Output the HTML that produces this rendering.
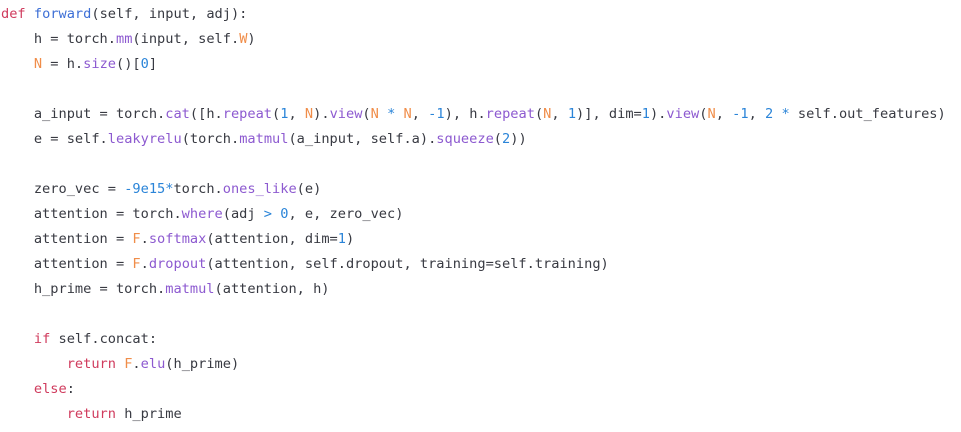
<!DOCTYPE html>
<html><head><meta charset="utf-8"><style>
html,body{margin:0;background:#fff;width:961px;height:432px;overflow:hidden}
pre{margin:0;position:absolute;left:1px;top:2px;font-family:"DejaVu Sans Mono",monospace;font-size:13.65px;line-height:25px;color:#383a42}
.k{color:#d03c5e}.f{color:#3d6fd6}.m{color:#8d5ad0}.o{color:#f08d49}.n{color:#2a84d8}
</style></head><body><pre><span class="k">def</span> <span class="f">forward</span>(self, input, adj):
    h = torch.<span class="m">mm</span>(input, self.<span class="o">W</span>)
    <span class="o">N</span> = h.<span class="m">size</span>()[<span class="n">0</span>]

    a_input = torch.<span class="m">cat</span>([h.<span class="m">repeat</span>(<span class="n">1</span>, <span class="o">N</span>).<span class="m">view</span>(<span class="o">N</span> <span class="n">*</span> <span class="o">N</span>, <span class="n">-1</span>), h.<span class="m">repeat</span>(<span class="o">N</span>, <span class="n">1</span>)], dim=<span class="n">1</span>).<span class="m">view</span>(<span class="o">N</span>, <span class="n">-1</span>, <span class="n">2</span> <span class="n">*</span> self.out_features)
    e = self.<span class="m">leakyrelu</span>(torch.<span class="m">matmul</span>(a_input, self.a).<span class="m">squeeze</span>(<span class="n">2</span>))

    zero_vec = <span class="n">-9e15*</span>torch.<span class="m">ones_like</span>(e)
    attention = torch.<span class="m">where</span>(adj <span class="n">&gt;</span> <span class="n">0</span>, e, zero_vec)
    attention = <span class="o">F</span>.<span class="m">softmax</span>(attention, dim=<span class="n">1</span>)
    attention = <span class="o">F</span>.<span class="m">dropout</span>(attention, self.dropout, training=self.training)
    h_prime = torch.<span class="m">matmul</span>(attention, h)

    <span class="k">if</span> self.concat:
        <span class="k">return</span> <span class="o">F</span>.<span class="m">elu</span>(h_prime)
    <span class="k">else</span>:
        <span class="k">return</span> h_prime
</pre></body></html>
